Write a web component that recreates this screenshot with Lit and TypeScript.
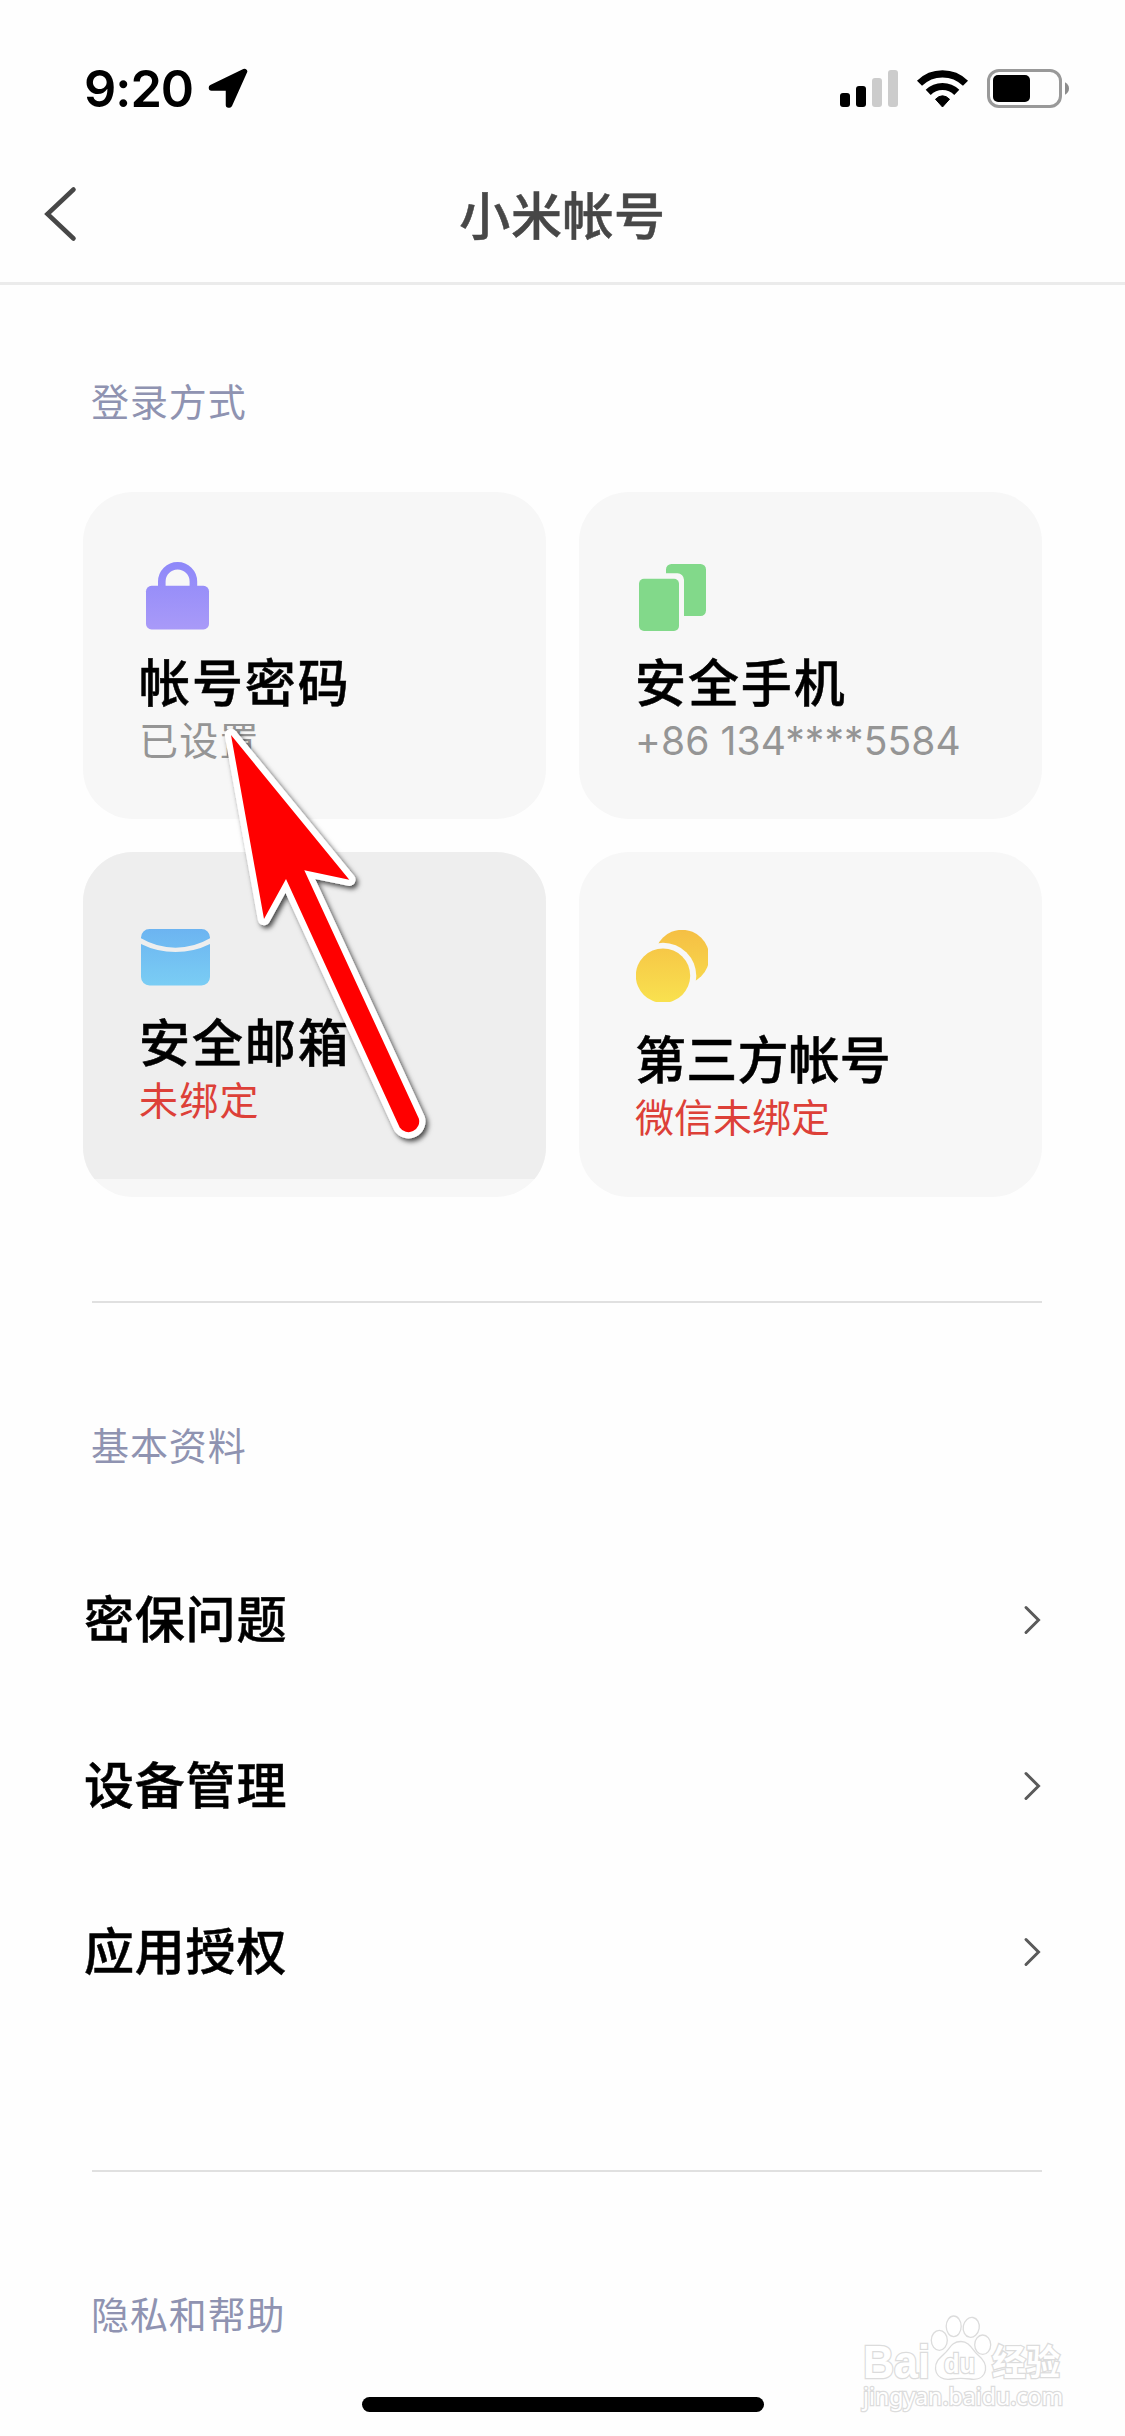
import { LitElement, html, css, svg } from "lit";
import { customElement, property } from "lit/decorators.js";

const lockIcon = svg`
  <defs><linearGradient id="g" gradientUnits="userSpaceOnUse" x1="0" y1="2" x2="0" y2="70">
    <stop offset="0" stop-color="#8e88f9"/><stop offset="1" stop-color="#a99af8"/></linearGradient></defs>
  <path d="M21.8 27V21.6a15.8 15.8 0 0 1 31.6 0V27" fill="none" stroke="url(#g)" stroke-width="7.6"/>
  <rect x="6" y="25.8" width="63" height="43.6" rx="5.5" fill="url(#g)"/>`;

const phoneIcon = svg`
  <path fill="#82d98a" d="M30 13.3V9.5a5.5 5.5 0 0 1 5.5-5.5H64.5a5.5 5.5 0 0 1 5.5 5.5V50.5a5.5 5.5 0 0 1-5.5 5.5H48V19.8a6.5 6.5 0 0 0-6.5-6.5z"/>
  <rect x="3" y="18.7" width="40" height="52.3" rx="5" fill="#82d98a"/>`;

const mailIcon = svg`
  <defs><linearGradient id="g" gradientUnits="userSpaceOnUse" x1="0" y1="9" x2="0" y2="66">
    <stop offset="0" stop-color="#6cb4f1"/><stop offset="1" stop-color="#7acdf4"/></linearGradient></defs>
  <path fill="url(#g)" d="M1 17.5A8.5 8.5 0 0 1 9.5 9H61.5A8.5 8.5 0 0 1 70 17.5V18.3Q54 27.7 35.5 27.7T1 18.3z"/>
  <path fill="url(#g)" d="M1 24Q17 32 35.5 32T70 24V57A8.5 8.5 0 0 1 61.5 65.5H9.5A8.5 8.5 0 0 1 1 57z"/>`;

const coinsIcon = svg`
  <defs><linearGradient id="g" gradientUnits="userSpaceOnUse" x1="0" y1="10" x2="0" y2="82">
    <stop offset="0" stop-color="#f5bf44"/><stop offset="1" stop-color="#f9e14f"/></linearGradient>
    <mask id="m"><rect width="72" height="90" fill="#fff"/><circle cx="27" cy="56" r="33.3" fill="#000"/></mask>
    <clipPath id="c"><rect y="10" width="72" height="72"/></clipPath></defs>
  <g clip-path="url(#c)">
    <circle cx="46" cy="37" r="27.2" fill="url(#g)" mask="url(#m)"/>
    <circle cx="27" cy="55.7" r="27.2" fill="url(#g)"/>
  </g>`;

@customElement("login-card")
class LoginCard extends LitElement {
  @property() heading = "";
  @property() note = "";
  @property() icon: unknown = null;
  @property({ type: Boolean, reflect: true }) alert = false;
  @property({ type: Boolean, reflect: true }) pressed = false;
  @property({ type: Boolean, reflect: true }) tall = false;

  static styles = css`
    :host {
      display: block;
      overflow: hidden;
      border-radius: 50px;
      background: #f7f7f7;
      font-family: "Noto Sans CJK SC", sans-serif;
    }
    .face {
      display: flex;
      flex-direction: column;
      box-sizing: border-box;
      height: 327px;
      padding: 68px 0 0 56px;
    }
    :host([pressed]) .face { background: #eeeeee; }
    .icon { display: block; width: 72px; height: 72px; margin: 0 0 18px 1px; }
    :host([tall]) .icon { height: 90px; margin-bottom: 17px; }
    .heading {
      font-size: 51px;
      font-weight: 500;
      line-height: 60px;
      letter-spacing: 1.9px;
      color: #000;
      -webkit-text-stroke: 0.5px #000;
      white-space: nowrap;
    }
    .note {
      margin-top: 6px;
      font-family: Inter, "Noto Sans CJK SC", sans-serif;
      font-size: 39px;
      line-height: 50px;
      letter-spacing: 1.2px;
      color: #959595;
      white-space: nowrap;
    }
    .note.latin { letter-spacing: 0.1px; }
    :host([tall]) .heading { letter-spacing: 0.2px; }
    :host([tall]) .note { letter-spacing: 0; }
    :host([alert]) .note { color: #dd4038; }
  `;

  render() {
    const latin = this.note.startsWith("+") ? "note latin" : "note";
    return html`<div class="face">
      <svg class="icon" viewBox=${this.tall ? "0 0 72 90" : "0 0 72 72"}>${this.icon}</svg>
      <div class="heading">${this.heading}</div>
      <div class=${latin}>${this.note}</div>
    </div>`;
  }
}

@customElement("app-root")
class AppRoot extends LitElement {
  static styles = css`
    :host {
      display: block;
      position: relative;
      box-sizing: border-box;
      width: 1125px;
      height: 2436px;
      overflow: hidden;
      background: #fefefe;
      font-family: "Noto Sans CJK SC", sans-serif;
    }
    .status {
      display: flex;
      align-items: center;
      box-sizing: border-box;
      height: 132px;
      padding: 46px 56px 0 84px;
    }
    .time {
      width: 124px;
      font: 600 50.5px/60px Inter, sans-serif;
      letter-spacing: -1px;
      color: #000;
    }
    .locate { width: 40px; height: 42px; }
    .radios { width: 230px; height: 42px; margin-left: auto; }
    .nav {
      display: grid;
      grid-template-columns: 120px 1fr 120px;
      align-items: center;
      height: 150px;
      border-bottom: 3px solid #ebebeb;
    }
    .back { width: 40px; height: 60px; margin: 14px 0 0 40px; }
    .title {
      margin-top: 12px;
      text-align: center;
      font-size: 51px;
      font-weight: 500;
      line-height: 60px;
      letter-spacing: 0.6px;
      color: #474747;
      -webkit-text-stroke: 0.5px #474747;
    }
    .body { padding: 85px 83px 0; }
    .label {
      padding-left: 8px;
      font-size: 38px;
      line-height: 60px;
      letter-spacing: 0.9px;
      color: #8f93b1;
    }
    .cards {
      display: grid;
      grid-template-columns: 463px 463px;
      grid-template-rows: 327px 345px;
      gap: 33px;
      margin-top: 62px;
    }
    .rule { height: 2px; margin: 104px 0 111px 9px; background: #e0e0e0; }
    .rows { margin-top: 63px; }
    .row { display: flex; align-items: center; justify-content: space-between; height: 166px; }
    .name {
      margin: -9px 0 0 1px;
      font-size: 50px;
      font-weight: 500;
      line-height: 60px;
      letter-spacing: 0.8px;
      color: #000;
      -webkit-text-stroke: 0.5px #000;
    }
    .chev { width: 20px; height: 32px; }
    .rule.second { margin-top: 135px; }
    .home {
      position: absolute;
      left: 362px;
      bottom: 24px;
      width: 402px;
      height: 15px;
      border-radius: 8px;
      background: #000;
    }
    .pointer { position: absolute; left: 200px; top: 700px; width: 260px; height: 460px; }
    .mark { position: absolute; left: 850px; top: 2300px; width: 230px; height: 120px; }
    .mark text { font-family: "Liberation Sans", "Noto Sans CJK SC", sans-serif; }
    .mark .url { font-family: "Noto Sans", sans-serif; }
  `;

  private rows = ["密保问题", "设备管理", "应用授权"];

  render() {
    return html`
      <div class="status">
        <div class="time">9:20</div>
        <svg class="locate" viewBox="0 0 40 42">
          <path d="M36.5 3.5L3.5 19.5V20H20.5V37H21.5Z" fill="#000" stroke="#000" stroke-width="5.5" stroke-linejoin="round"/>
        </svg>
        <svg class="radios" viewBox="839 68 230 42">
          <g fill="#000"><rect x="840" y="93" width="10" height="14" rx="3"/><rect x="856" y="86" width="10" height="21" rx="3"/></g>
          <g fill="#ccc"><rect x="872" y="78" width="10" height="29" rx="3"/><rect x="888" y="70" width="10" height="37" rx="3"/></g>
          <g fill="none" stroke="#000" stroke-width="7.2">
            <path d="M919.5 83.2a32.8 32.8 0 0 1 46 0"/>
            <path d="M928.2 92.3a20.5 20.5 0 0 1 28.6 0"/>
          </g>
          <path d="M942.5 107l-7-7.8q7-6.8 14 0z" fill="#000" stroke="#000" stroke-width="1" stroke-linejoin="round"/>
          <rect x="988.5" y="70.5" width="72" height="36" rx="10.5" fill="none" stroke="#999" stroke-width="3"/>
          <rect x="993" y="75" width="37" height="27" rx="5" fill="#000"/>
          <path d="M1065 82.3q4 2.2 4 6.2t-4 6.2z" fill="#8c8c8c"/>
        </svg>
      </div>
      <div class="nav">
        <svg class="back" viewBox="0 0 40 60">
          <path d="M33.5 5.5L7.500 30L33.500 54.500" fill="none" stroke="#474747" stroke-width="4.6" stroke-linecap="round"/>
        </svg>
        <div class="title">小米帐号</div>
      </div>
      <div class="body">
        <div class="label">登录方式</div>
        <div class="cards">
          <login-card heading="帐号密码" note="已设置" .icon=${lockIcon}></login-card>
          <login-card heading="安全手机" note="+86 134****5584" .icon=${phoneIcon}></login-card>
          <login-card heading="安全邮箱" note="未绑定" alert pressed .icon=${mailIcon}></login-card>
          <login-card heading="第三方帐号" note="微信未绑定" alert tall .icon=${coinsIcon}></login-card>
        </div>
        <div class="rule"></div>
        <div class="label">基本资料</div>
        <div class="rows">
          ${this.rows.map(
            (name) => html`<div class="row">
              <div class="name">${name}</div>
              <svg class="chev" viewBox="0 0 20 32">
                <path d="M4 3.5L16.5 16L4 28.5" fill="none" stroke="#5a5a5a" stroke-width="3" stroke-linecap="round"/>
              </svg>
            </div>`
          )}
        </div>
        <div class="rule second"></div>
        <div class="label">隐私和帮助</div>
      </div>
      <svg class="pointer" viewBox="200 700 260 460">
        <defs><filter id="s" x="-20%" y="-20%" width="140%" height="140%">
          <feDropShadow dx="2.5" dy="3" stdDeviation="2.5" flood-color="#000" flood-opacity="0.7"/></filter></defs>
        <path d="M231 735L349.3 879.7L304.3 870.3L418.800 1118.500A10.700 10.700 0 0 1 399.700 1127.500L286 879L264 919Z"
          fill="#fff" stroke="#fff" stroke-width="12.5" stroke-linejoin="round" filter="url(#s)"/>
        <path d="M231 735L349.3 879.7L304.3 870.3L418.800 1118.500A10.700 10.700 0 0 1 399.700 1127.500L286 879L264 919Z" fill="#f00"/>
      </svg>
      <svg class="mark" viewBox="850 2300 230 120">
        <g fill="#fff" stroke="#dcdcdc" stroke-width="1.3">
          <ellipse cx="939.3" cy="2340.3" rx="8" ry="10"/>
          <ellipse cx="953.7" cy="2326.3" rx="7.5" ry="10.3"/>
          <ellipse cx="971.3" cy="2327.3" rx="8" ry="10" transform="rotate(10 971 2327)"/>
          <ellipse cx="982.7" cy="2344.7" rx="8" ry="9.7"/>
          <path d="M961 2341.5C970 2341.5 972 2350 978 2355C984 2360 986.5 2364 985.5 2370C984 2378 977 2380 970 2379C963 2378 958 2378 952 2379C943 2380.5 936.5 2377 935.5 2369C935 2362 939 2358.5 944 2354C950 2349 951 2341.5 961 2341.5Z"/>
          <g paint-order="stroke" stroke-width="2.6" font-weight="700">
            <text x="863" y="2378" font-size="46" textLength="67" lengthAdjust="spacingAndGlyphs">Bai</text>
            <text x="944" y="2373" font-size="28" textLength="31" lengthAdjust="spacingAndGlyphs">du</text>
            <text x="992" y="2375" font-size="35" textLength="68" lengthAdjust="spacingAndGlyphs">经验</text>
            <text class="url" x="863" y="2405" font-size="24" font-weight="400" textLength="200" lengthAdjust="spacingAndGlyphs">jingyan.baidu.com</text>
          </g>
        </g>
      </svg>
      <div class="home"></div>
    `;
  }
}
